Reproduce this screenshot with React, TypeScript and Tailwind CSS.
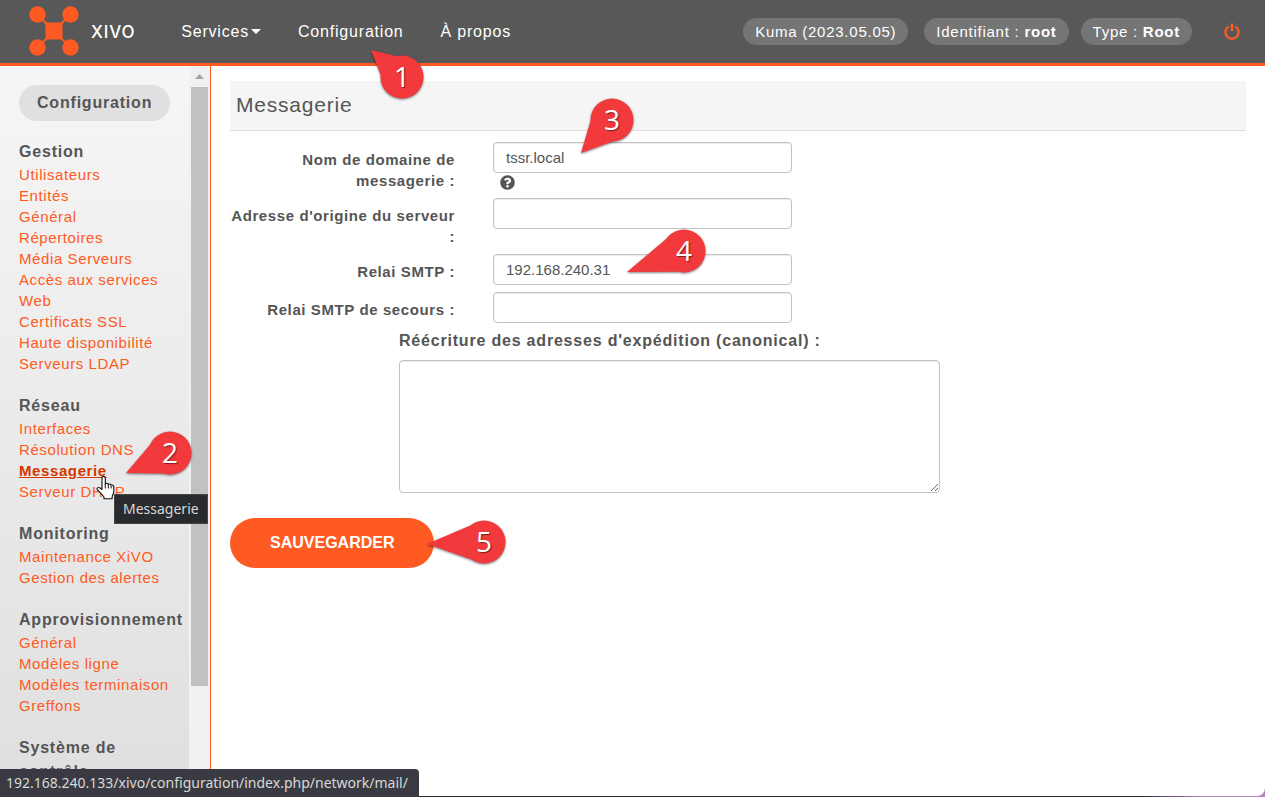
import React from "react";
import { FaQuestionCircle } from "react-icons/fa";

type MenuItem = { label: string; active?: boolean };
type MenuSection = { title: string; items: MenuItem[] };

const menu: MenuSection[] = [
  {
    title: "Gestion",
    items: [
      { label: "Utilisateurs" },
      { label: "Entités" },
      { label: "Général" },
      { label: "Répertoires" },
      { label: "Média Serveurs" },
      { label: "Accès aux services" },
      { label: "Web" },
      { label: "Certificats SSL" },
      { label: "Haute disponibilité" },
      { label: "Serveurs LDAP" },
    ],
  },
  {
    title: "Réseau",
    items: [
      { label: "Interfaces" },
      { label: "Résolution DNS" },
      { label: "Messagerie", active: true },
      { label: "Serveur DHCP" },
    ],
  },
  {
    title: "Monitoring",
    items: [{ label: "Maintenance XiVO" }, { label: "Gestion des alertes" }],
  },
  {
    title: "Approvisionnement",
    items: [
      { label: "Général" },
      { label: "Modèles ligne" },
      { label: "Modèles terminaison" },
      { label: "Greffons" },
    ],
  },
  { title: "Système de contrôle", items: [] },
];

function Logo() {
  return (
    <svg width="50" height="51" viewBox="0 0 50 51" fill="#ff5a22" aria-hidden="true">
      <path d="M8.5 8.5 41.5 41.5M41.5 8.5 8.5 41.5" stroke="#ff5a22" strokeWidth="2" />
      <circle cx="8.5" cy="8.5" r="8.2" />
      <circle cx="41.5" cy="8.5" r="8.2" />
      <circle cx="8.5" cy="41.5" r="8.2" />
      <circle cx="41.5" cy="41.5" r="8.2" />
      <rect x="16.5" y="16.5" width="17" height="17" rx="1" />
    </svg>
  );
}

function PowerIcon() {
  return (
    <svg width="16" height="17" viewBox="0 0 16 17" fill="none" stroke="currentColor" aria-hidden="true">
      <path d="M4.600 3.600A6.600 6.600 0 1 0 11.400 3.600" strokeWidth="2.200" />
      <path d="M8 0.500V8" strokeWidth="2.600" />
    </svg>
  );
}

function Header() {
  return (
    <header className="flex h-[66px] shrink-0 items-center justify-between border-b-3 border-[#ff5a22] bg-[#585858] pr-[25px] pl-[29px] text-white">
      <div className="flex items-center">
        <a href="#accueil" className="flex items-center gap-3">
          <Logo />
          <span className="font-['Inter'] text-[17px] leading-6 font-medium">XIVO</span>
        </a>
        <nav className="ml-[46px] flex items-center gap-[37px] text-[16px] leading-6">
          <a href="#services" className="flex items-center gap-0.5">
            Services
            <svg width="10" height="5" viewBox="0 0 10 5" fill="currentColor" aria-hidden="true">
              <path d="M0 0h10L5 5z" />
            </svg>
          </a>
          <a href="#configuration">Configuration</a>
          <a href="#apropos">À propos</a>
        </nav>
      </div>
      <div className="flex items-center text-[15px] leading-[27px] tracking-wider">
        <span className="rounded-full bg-[#757575] px-3">Kuma (2023.05.05)</span>
        <span className="ml-4 rounded-full bg-[#757575] px-3">
          Identifiant : <b>root</b>
        </span>
        <span className="ml-3 rounded-full bg-[#757575] px-3">
          Type : <b>Root</b>
        </span>
        <button type="button" aria-label="Déconnexion" className="ml-8 text-[#ff5a22]">
          <PowerIcon />
        </button>
      </div>
    </header>
  );
}

function Sidebar() {
  return (
    <aside className="flex w-[211px] shrink-0 overflow-hidden border-r border-[#ff5a22]">
      <div className="min-w-0 flex-1 bg-linear-to-b from-[#f6f6f6] to-[#dfdfdf] pt-[19px] pl-[19px]">
        <h2 className="inline-block rounded-full bg-[#e0e0e0] px-[18px] text-[16px] leading-9 font-bold">
          Configuration
        </h2>
        <nav className="mt-[19px] flex flex-col gap-5">
          {menu.map((section) => (
            <section key={section.title}>
              <h3 className="text-[16px] leading-6 font-bold">{section.title}</h3>
              <ul className="text-[15px] leading-[21px] tracking-[0.04em]">
                {section.items.map((item) => (
                  <li key={item.label}>
                    <a
                      href="#menu"
                      className={item.active ? "font-bold text-[#d53600] underline" : "text-[#ff5a22]"}
                    >
                      {item.label}
                    </a>
                  </li>
                ))}
              </ul>
            </section>
          ))}
        </nav>
      </div>
      <div className="flex w-[21px] shrink-0 flex-col items-center bg-[#f1f1f1]">
        <svg className="my-2 shrink-0" width="9" height="5" viewBox="0 0 9 5" fill="#a3a3a3" aria-hidden="true">
          <path d="M4.5 0 9 5H0z" />
        </svg>
        <div className="h-[82%] w-[17px] bg-[#c1c1c1]" />
      </div>
    </aside>
  );
}

const fieldClass =
  "rounded border border-[#c2c2c2] bg-white text-[15px] tracking-normal text-[#555] shadow-[inset_0_1px_1px_rgba(0,0,0,0.08)]";

type FieldProps = { id: string; label: string; value?: string; help?: boolean };

function Field({ id, label, value = "", help = false }: FieldProps) {
  return (
    <div className="flex gap-[38px]">
      <label htmlFor={id} className="w-[225px] pt-[7px] text-right font-bold">
        {label}
      </label>
      <div className="w-[299px]">
        <input id={id} type="text" defaultValue={value} className={"h-[31px] w-full px-3 " + fieldClass} />
        {help && (
          <button type="button" aria-label="Aide" className="mt-[2px] ml-[7px] block">
            <FaQuestionCircle size={15} />
          </button>
        )}
      </div>
    </div>
  );
}

function MailForm() {
  return (
    <form className="text-[15px] leading-[21px] tracking-[0.04em]">
      <div className="mt-[11px] flex flex-col gap-[7px]">
        <Field id="domaine" label="Nom de domaine de messagerie :" value="tssr.local" help />
        <Field id="origine" label="Adresse d'origine du serveur :" />
        <Field id="relai" label="Relai SMTP :" value="192.168.240.31" />
        <Field id="secours" label="Relai SMTP de secours :" />
        <div className="ml-[169px] flex max-w-[541px] flex-col gap-2">
          <label htmlFor="canonical" className="text-[16px] leading-[22px] font-bold tracking-wider">
            Réécriture des adresses d'expédition (canonical) :
          </label>
          <textarea id="canonical" className={"block h-[133px] w-full px-3 py-1 " + fieldClass} />
        </div>
      </div>
      <button
        type="submit"
        className="mt-[25px] rounded-full bg-[#ff5a22] px-10 text-[16px] leading-[50px] font-bold tracking-normal text-white"
      >
        SAUVEGARDER
      </button>
    </form>
  );
}

type CalloutProps = { n: number; cx: number; cy: number; dx: number; dy: number; spread: number };

const RADIUS = 21.5;

// A numbered disc whose pointer ends at (dx, dy) from the centre; spread is
// the half angle, in degrees, that the pointer's base takes on the disc.
function Callout({ n, cx, cy, dx, dy, spread }: CalloutProps) {
  const dir = Math.atan2(dy, dx);
  const half = (spread * Math.PI) / 180;
  const point = (a: number) => `${RADIUS * Math.cos(a)},${RADIUS * Math.sin(a)}`;
  return (
    <div className="pointer-events-none absolute size-[140px]" style={{ left: cx - 70, top: cy - 70 }}>
      <svg
        className="absolute inset-0 drop-shadow-[0_1px_1px_rgba(0,0,0,0.5)]"
        width="140"
        height="140"
        viewBox="-70 -70 140 140"
        fill="#f23a3c"
        aria-hidden="true"
      >
        <circle r={RADIUS} />
        <polygon points={`0,0 ${point(dir - half)} ${dx},${dy} ${point(dir + half)}`} />
      </svg>
      <span className="absolute inset-0 flex items-center justify-center pb-[2px] font-['Open_Sans'] text-[28px] leading-8 font-medium tracking-normal text-white [text-shadow:1px_1px_1px_rgba(0,0,0,0.5)]">
        {n}
      </span>
    </div>
  );
}

function HandCursor() {
  return (
    <svg className="absolute top-[475px] left-[96px]" width="19" height="25" viewBox="0 0 19 25" aria-hidden="true">
      <path
        d="M6 14.500V3a1.600 1.600 0 0 1 3.300 0v6.200c.3-1.300 2.800-1.200 3 .4.6-1 2.600-.7 2.800.7.9-.7 2.700-.2 2.700 1.500v4.900c0 2.200-1.700 3.600-1.700 5.800v1.300H8v-1.600C7 20.500 4.600 18.400 1.300 14.600c-.9-1.300.8-2.800 2.300-1.700z"
        fill="#fff"
        stroke="#111"
        strokeWidth="1.1"
        strokeLinejoin="round"
      />
      <path d="M9.300 9v4.500M12.300 10v3.500M15.100 11v2.500" stroke="#111" strokeWidth="1" fill="none" />
    </svg>
  );
}

export default function App() {
  return (
    <div className="relative h-screen overflow-hidden bg-linear-to-r from-[#2a2330] from-90% to-[#b583bd] to-95% pb-px font-['Liberation_Sans',Arial,sans-serif] tracking-wider text-[#555]">
      <div className="flex h-full flex-col overflow-hidden rounded-br-lg bg-white">
        <Header />
        <div className="flex min-h-0 flex-1">
          <Sidebar />
          <main className="min-w-0 flex-1 px-[19px] pt-[15px]">
            <h1 className="border-b border-[#ddd] bg-[#f5f5f5] px-[6px] pb-[2px] text-[21px] leading-[47px]">
              Messagerie
            </h1>
            <MailForm />
          </main>
        </div>
      </div>

      <Callout n={1} cx={402} cy={77} dx={-31} dy={-27} spread={35} />
      <Callout n={2} cx={170} cy={453} dx={-44} dy={20} spread={48} />
      <Callout n={3} cx={612} cy={120} dx={-31} dy={33} spread={44} />
      <Callout n={4} cx={684} cy={251} dx={-57} dy={21} spread={55} />
      <Callout n={5} cx={484} cy={542} dx={-57} dy={2} spread={52} />

      <HandCursor />
      <div
        role="tooltip"
        className="absolute top-[494px] left-[114px] border border-[#45464a] bg-[#292a2d] px-2 font-['Noto_Sans',sans-serif] text-[14px] leading-7 tracking-normal text-[#d8d8d8]"
      >
        Messagerie
      </div>
      <div className="absolute bottom-0 left-0 rounded-tr bg-[#3a3b42] pr-[11px] pl-[6px] font-['Noto_Sans',sans-serif] text-[14px] leading-7 tracking-normal text-[#d8d8d8]">
        192.168.240.133/xivo/configuration/index.php/network/mail/
      </div>
    </div>
  );
}
